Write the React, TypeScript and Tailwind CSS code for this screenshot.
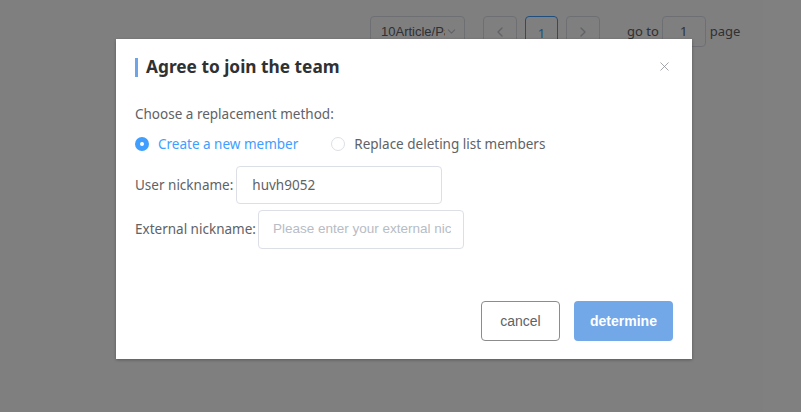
import { X, ChevronLeft, ChevronRight, ChevronDown } from "lucide-react";

const FONT = { fontFamily: '"Noto Sans", "Open Sans", sans-serif' };
const ARIAL = { fontFamily: '"Liberation Sans", Arial, sans-serif' };

function Pagination() {
  return (
    <div className="flex items-start pt-4 pl-[370px] text-[13px] text-[#606266]" style={FONT}>
      <div className="flex h-[31px] w-[95px] items-center justify-between rounded border border-[#dcdfe6] pl-[10px] pr-[6px]">
        <span className="w-[64px] overflow-hidden whitespace-nowrap text-[13px]" style={ARIAL}>10Article/Page</span>
        <ChevronDown size={13} className="text-[#c0c4cc]" />
      </div>
      <div className="ml-[18px] flex h-[31px] w-[34px] items-center justify-center rounded border border-[#dcdfe6] text-[#c0c4cc]">
        <ChevronLeft size={16} />
      </div>
      <div className="ml-[8px] flex h-[31px] w-[33px] items-center justify-center rounded border border-[#409eff] pt-[4px] text-[#409eff]">
        1
      </div>
      <div className="ml-[8px] flex h-[31px] w-[34px] items-center justify-center rounded border border-[#dcdfe6] text-[#c0c4cc]">
        <ChevronRight size={16} />
      </div>
      <div className="ml-[27px] flex h-[31px] items-center">go to</div>
      <div className="ml-[3px] flex h-[31px] w-[44px] items-center justify-center rounded border border-[#dcdfe6]">1</div>
      <div className="ml-[4px] flex h-[31px] items-center">page</div>
    </div>
  );
}

export default function App() {
  return (
    <div className="relative h-[412px] w-[801px] overflow-hidden bg-white">
      <Pagination />
      <div className="absolute inset-0 bg-black/50">
        <div
          className="ml-[116px] mt-[39px] h-[320px] w-[576px] bg-white shadow-[0_1px_3px_rgba(0,0,0,0.3)]"
          style={FONT}
        >
          <div className="flex items-center justify-between pl-[19px] pr-[20px] pt-[16px]">
            <div className="flex items-center">
              <span className="h-[19px] w-[3px] bg-[#6fa5e8]" />
              <span className="ml-[8px] text-[17.3px] font-bold leading-[24px] text-[#303133]">Agree to join the team</span>
            </div>
            <X size={15} strokeWidth={1.3} className="-mt-[2px] text-[#909399]" />
          </div>

          <div className="mt-[25px] pl-[19px] text-[13.5px] leading-[20px] text-[#606266]">Choose a replacement method:</div>

          <div className="mt-[10px] flex items-center pl-[19px] text-[13.5px] leading-[20px]">
            <span className="flex h-[14px] w-[14px] items-center justify-center rounded-full bg-[#409eff]">
              <span className="h-[4px] w-[4px] rounded-full bg-white" />
            </span>
            <span className="ml-[9px] text-[#409eff]">Create a new member</span>
            <span className="ml-[33px] h-[14px] w-[14px] rounded-full border border-[#dcdfe6]" />
            <span className="ml-[9px] text-[#606266]">Replace deleting list members</span>
          </div>

          <div className="mt-[12px] flex items-center pl-[19px] text-[13.5px] text-[#606266]">
            <span>User nickname:</span>
            <div className="ml-[3px] flex h-[38px] w-[206px] items-center rounded border border-[#dcdfe6] px-[15px] text-[#606266]">
              huvh9052
            </div>
          </div>

          <div className="mt-[6px] flex items-center pl-[19px] text-[13.5px] text-[#606266]">
            <span>External nickname:</span>
            <div className="ml-[2px] flex h-[39px] w-[206px] items-center rounded border border-[#dcdfe6] pl-[14px]">
              <span className="w-[178px] overflow-hidden whitespace-nowrap text-[13.5px] text-[#b8bcc4]" style={ARIAL}>
                Please enter your external nic
              </span>
            </div>
          </div>

          <div className="mt-[52px] flex justify-end gap-[14px] pr-[19px] text-[14px]" style={ARIAL}>
            <div className="flex h-[40px] w-[79px] items-center justify-center rounded border border-[#8c8c8c] text-[#606266]">cancel</div>
            <div className="flex h-[40px] w-[99px] items-center justify-center rounded bg-[#72a7e8] font-bold text-white">determine</div>
          </div>
        </div>
      </div>
    </div>
  );
}
